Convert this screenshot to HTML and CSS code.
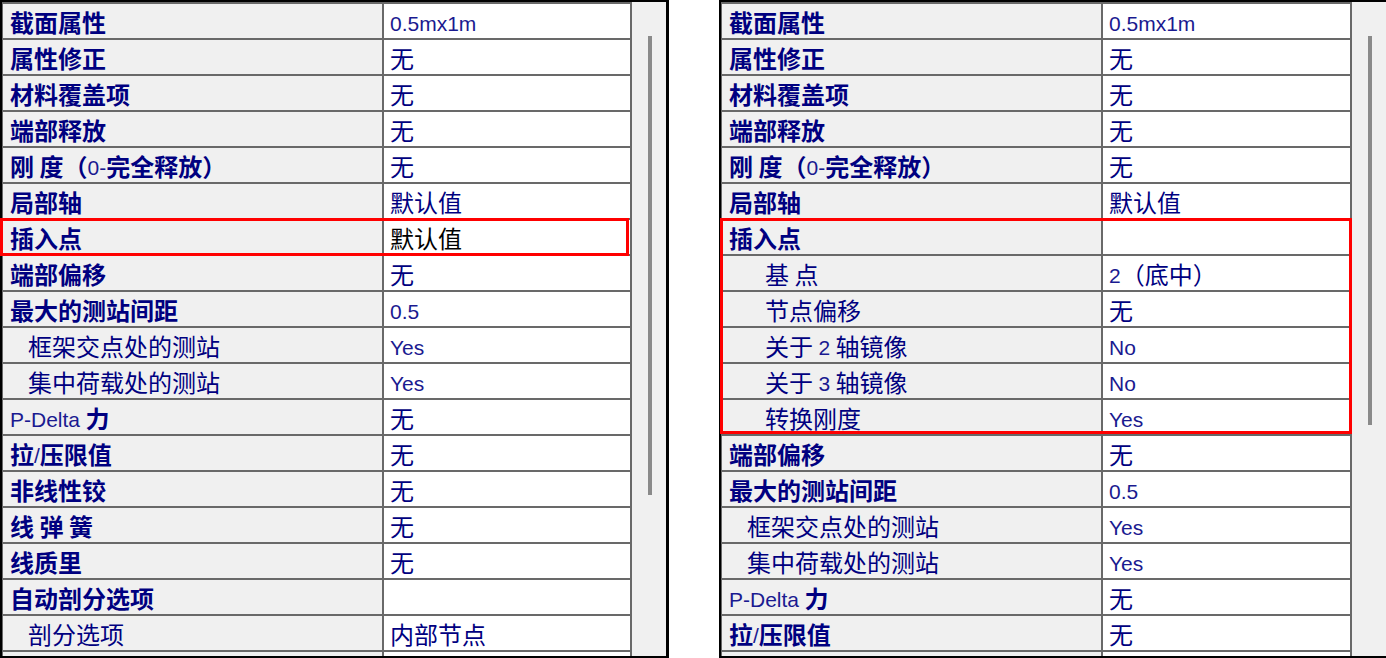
FILE: index.html
```html
<!DOCTYPE html>
<html lang="zh-CN">
<head>
  <meta charset="UTF-8">
  <title>框架属性</title>
  <link rel="stylesheet" href="styles.css">
</head>
<body>

  <div class="page">
    <!-- Before: insertion point collapsed -->
    <div class="panel panel-left">
      <div class="grid">
        <div class="row"><div class="label">截面属性</div><div class="value"><span class="lat">0.5mx1m</span></div></div>
        <div class="row"><div class="label">属性修正</div><div class="value">无</div></div>
        <div class="row"><div class="label">材料覆盖项</div><div class="value">无</div></div>
        <div class="row"><div class="label">端部释放</div><div class="value">无</div></div>
        <div class="row"><div class="label">刚 度（<span class="lat">0-</span>完全释放）</div><div class="value">无</div></div>
        <div class="row"><div class="label">局部轴</div><div class="value">默认值</div></div>
        <div class="row"><div class="label">插入点</div><div class="value value-black">默认值</div></div>
        <div class="row"><div class="label">端部偏移</div><div class="value">无</div></div>
        <div class="row"><div class="label">最大的测站间距</div><div class="value"><span class="lat">0.5</span></div></div>
        <div class="row"><div class="label sub">框架交点处的测站</div><div class="value"><span class="lat">Yes</span></div></div>
        <div class="row"><div class="label sub">集中荷载处的测站</div><div class="value"><span class="lat">Yes</span></div></div>
        <div class="row"><div class="label"><span class="lat">P-Delta</span> 力</div><div class="value">无</div></div>
        <div class="row"><div class="label">拉<span class="lat">/</span>压限值</div><div class="value">无</div></div>
        <div class="row"><div class="label">非线性铰</div><div class="value">无</div></div>
        <div class="row"><div class="label">线 弹 簧</div><div class="value">无</div></div>
        <div class="row"><div class="label">线质里</div><div class="value">无</div></div>
        <div class="row"><div class="label">自动剖分选项</div><div class="value"></div></div>
        <div class="row"><div class="label sub">剖分选项</div><div class="value">内部节点</div></div>
        <div class="row"><div class="label"></div><div class="value"></div></div>
      </div>
      <div class="scroll"><div class="thumb thumb-long"></div></div>
      <div class="mark mark-left"></div>
    </div>

    <!-- After: insertion point expanded -->
    <div class="panel panel-right">
      <div class="grid">
        <div class="row"><div class="label">截面属性</div><div class="value"><span class="lat">0.5mx1m</span></div></div>
        <div class="row"><div class="label">属性修正</div><div class="value">无</div></div>
        <div class="row"><div class="label">材料覆盖项</div><div class="value">无</div></div>
        <div class="row"><div class="label">端部释放</div><div class="value">无</div></div>
        <div class="row"><div class="label">刚 度（<span class="lat">0-</span>完全释放）</div><div class="value">无</div></div>
        <div class="row"><div class="label">局部轴</div><div class="value">默认值</div></div>
        <div class="row"><div class="label">插入点</div><div class="value"></div></div>
        <div class="row"><div class="label sub2">基 点</div><div class="value"><span class="lat">2</span>（底中）</div></div>
        <div class="row"><div class="label sub2">节点偏移</div><div class="value">无</div></div>
        <div class="row"><div class="label sub2">关于 <span class="lat">2</span> 轴镜像</div><div class="value"><span class="lat">No</span></div></div>
        <div class="row"><div class="label sub2">关于 <span class="lat">3</span> 轴镜像</div><div class="value"><span class="lat">No</span></div></div>
        <div class="row"><div class="label sub2">转换刚度</div><div class="value"><span class="lat">Yes</span></div></div>
        <div class="row"><div class="label">端部偏移</div><div class="value">无</div></div>
        <div class="row"><div class="label">最大的测站间距</div><div class="value"><span class="lat">0.5</span></div></div>
        <div class="row"><div class="label sub">框架交点处的测站</div><div class="value"><span class="lat">Yes</span></div></div>
        <div class="row"><div class="label sub">集中荷载处的测站</div><div class="value"><span class="lat">Yes</span></div></div>
        <div class="row"><div class="label"><span class="lat">P-Delta</span> 力</div><div class="value">无</div></div>
        <div class="row"><div class="label">拉<span class="lat">/</span>压限值</div><div class="value">无</div></div>
        <div class="row"><div class="label"></div><div class="value"></div></div>
      </div>
      <div class="scroll scroll-wide"><div class="thumb thumb-short"></div></div>
      <div class="mark mark-right"></div>
    </div>
  </div>

</body>
</html>
```

FILE: styles.css
```css
body {
  margin: 0;
  background: #fff;
  font-family: "Noto Sans CJK SC", "Liberation Sans", sans-serif;
  font-size: 24px;
  color: #000080;
}
.page {
  display: flex;
  gap: 50px;
  width: 1386px;
  height: 658px;
  overflow: hidden;
}
.panel {
  position: relative;
  display: flex;
  height: 658px;
  box-sizing: border-box;
  border: 2px solid #000;
}
.panel-left {
  width: 669px;
  border-right-width: 3px;
}
.panel-right {
  flex: 1;
  border-right: none;
}
.grid {
  width: 628px;
  height: 654px;
  overflow: hidden;
  border-left: 1px solid #696969;
  border-right: 2px solid #696969;
}
.row {
  display: flex;
  height: 36px;
  box-sizing: border-box;
  border-top: 2px solid #696969;
}
.label {
  width: 379px;
  box-sizing: border-box;
  padding-left: 7px;
  background: #f0f0f0;
  font-weight: 700;
  line-height: 35px;
  white-space: nowrap;
}
.label.sub {
  padding-left: 25px;
  font-weight: 400;
}
.label.sub2 {
  padding-left: 43px;
  font-weight: 400;
}
.value {
  flex: 1;
  padding-left: 6px;
  background: #fff;
  border-left: 2px solid #696969;
  line-height: 35px;
  white-space: nowrap;
}
.value-black {
  color: #000;
}
.lat {
  font-family: "Liberation Sans", sans-serif;
  font-size: 21px;
  font-weight: 400;
  color: #1a1a90;
  vertical-align: 1px;
}
.scroll {
  width: 34px;
  padding-top: 34px;
  background: #f0f0f0;
}
.scroll-wide {
  width: 35px;
}
.thumb {
  width: 4px;
  margin-left: 16px;
  background: #8a8a8a;
}
.thumb-long {
  height: 459px;
}
.thumb-short {
  height: 389px;
}
.mark {
  position: absolute;
  top: 216px;
  box-sizing: border-box;
  border: 3px solid #ff0000;
}
.mark-left {
  left: -2px;
  width: 629px;
  height: 38px;
}
.mark-right {
  left: -1px;
  width: 632px;
  height: 216px;
}
```
